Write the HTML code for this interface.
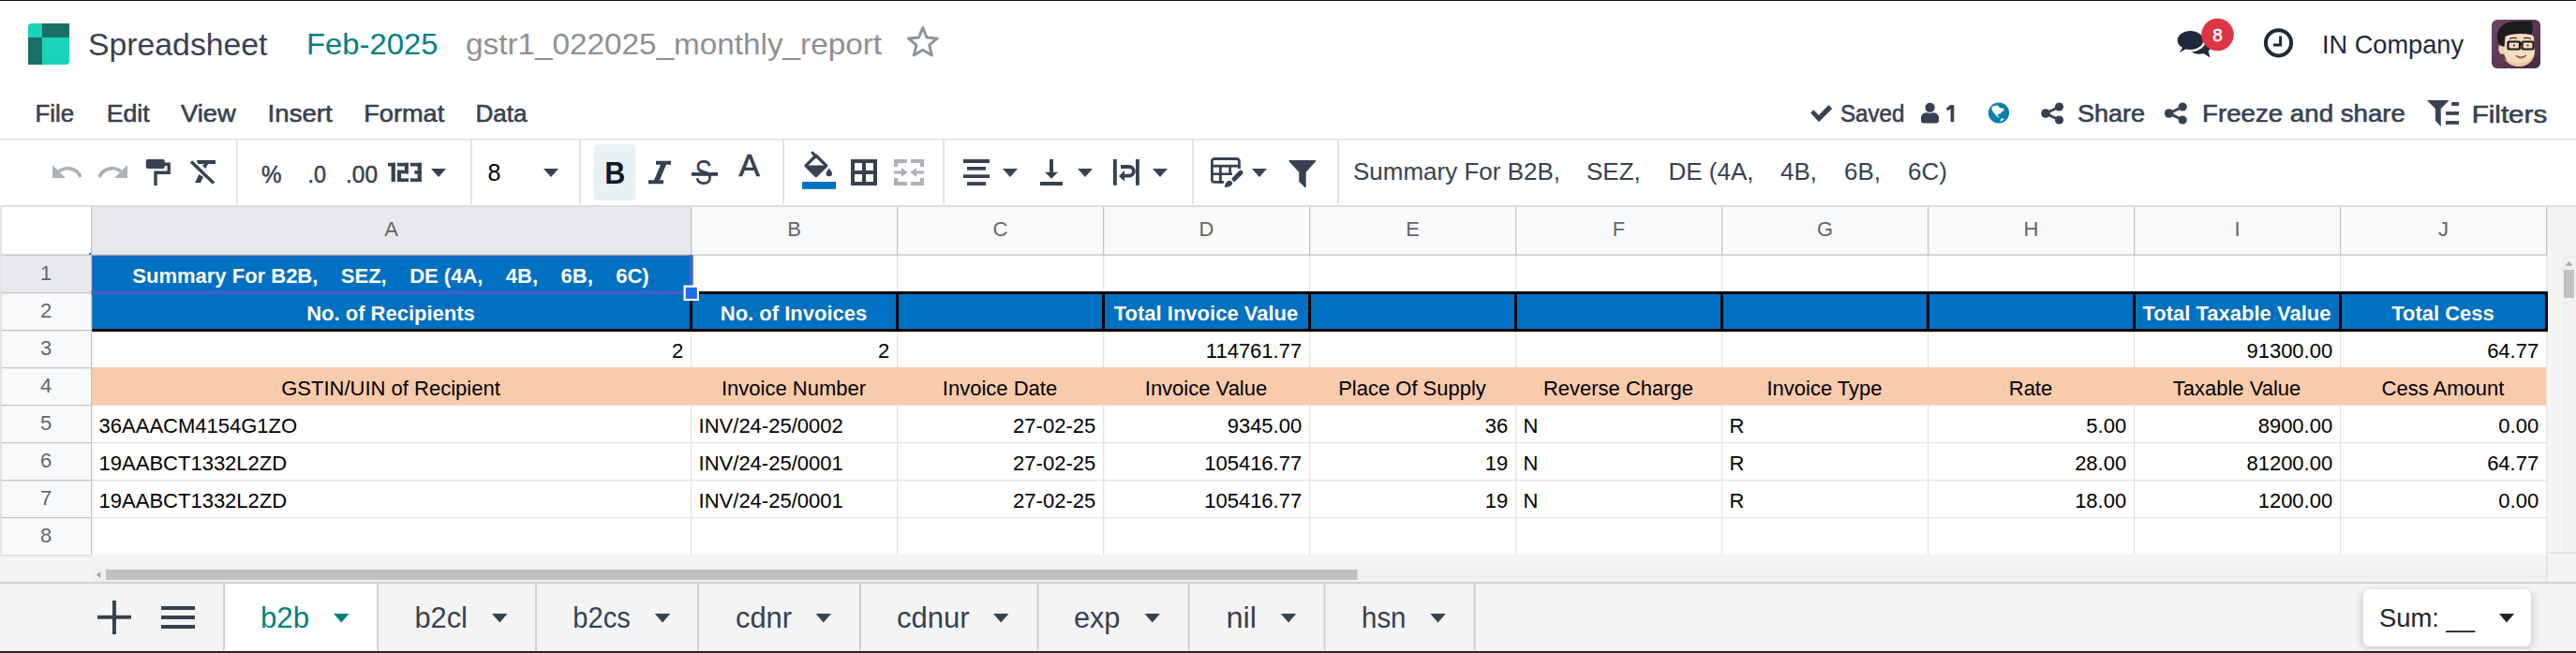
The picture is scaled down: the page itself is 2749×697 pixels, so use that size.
<!DOCTYPE html>
<html><head><meta charset="utf-8">
<style>
html,body{margin:0;padding:0;background:#fff;width:2749px;height:697px;overflow:hidden}
svg{display:block;font-family:"Liberation Sans",sans-serif}
</style></head><body>
<svg width="2749" height="697" viewBox="0 0 2749 697">
<rect x="0" y="0" width="2749" height="697" fill="#ffffff" />
<rect x="0" y="0" width="2749" height="1" fill="#111111" />
<g><path d="M34,25 H45 V40 H30 V29 A4,4 0 0 1 34,25 Z" fill="#1ad3bb"/><rect x="45" y="25" width="29" height="15" fill="#1b6f66"/><rect x="30" y="40" width="15" height="29" fill="#1b6f66"/><path d="M45,40 H74 V65 A4,4 0 0 1 70,69 H45 Z" fill="#1ad3bb"/></g>
<text x="94" y="59.3" font-size="34" fill="#374151" font-weight="400" text-anchor="start" textLength="191.5" lengthAdjust="spacingAndGlyphs"  xml:space="preserve">Spreadsheet</text>
<text x="327" y="58" font-size="32" fill="#017e84" font-weight="400" text-anchor="start" textLength="140.5" lengthAdjust="spacingAndGlyphs"  xml:space="preserve">Feb-2025</text>
<text x="497" y="58" font-size="32" fill="#8f8f8f" font-weight="400" text-anchor="start" textLength="444" lengthAdjust="spacingAndGlyphs"  xml:space="preserve">gstr1_022025_monthly_report</text>
<polygon points="984.80,29.70 989.09,39.99 1000.21,40.89 991.74,48.16 994.32,59.01 984.80,53.20 975.28,59.01 977.86,48.16 969.39,40.89 980.51,39.99" fill="none" stroke="#8e949c" stroke-width="3" stroke-linejoin="round"/>
<g fill="#1f2937"><ellipse cx="2347" cy="47.5" rx="13" ry="10.2"/><path d="M2350,56 L2358.5,61.5 L2356,52 Z"/></g>
<ellipse cx="2337.5" cy="43" rx="16.3" ry="12.3" fill="#ffffff"/>
<g fill="#1f2937"><ellipse cx="2337.5" cy="43" rx="13.8" ry="10"/><path d="M2326,56 L2334,51.5 L2330,49 Z"/></g>
<circle cx="2366.5" cy="37" r="17.3" fill="#dc3545"/>
<text x="2366.5" y="43.5" font-size="19" fill="#ffffff" font-weight="400" text-anchor="middle" stroke="#ffffff" stroke-width="0.5"  xml:space="preserve">8</text>
<circle cx="2431.5" cy="45.8" r="13.6" fill="none" stroke="#1f2937" stroke-width="4"/>
<path d="M2433.6,38.5 V48 H2426" fill="none" stroke="#1f2937" stroke-width="3"/>
<text x="2478" y="57" font-size="28" fill="#1f2937" font-weight="400" text-anchor="start" textLength="151" lengthAdjust="spacingAndGlyphs"  xml:space="preserve">IN Company</text>
<defs><linearGradient id="avg" x1="0" y1="0" x2="1" y2="1"><stop offset="0" stop-color="#6d4867"/><stop offset="1" stop-color="#4a2841"/></linearGradient></defs>
<rect x="2659" y="21" width="52" height="52" rx="6" fill="url(#avg)"/>
<g><ellipse cx="2670.5" cy="52" rx="4.2" ry="6" fill="#f3cfae"/><path d="M2672,40 C2674,33 2700,32 2704,40 L2705,56 C2704,66 2695,71 2688,71 C2679,70 2673,64 2672,56 Z" fill="#f8dcc0"/><path d="M2672,62 C2676,69 2683,71 2688,71 C2695,71 2702,67 2704,60 C2698,66 2690,68 2684,67 C2678,66 2674,64 2672,62 Z" fill="#eec7a4"/><path d="M2666,46 C2662,31 2671,23 2684,23 C2692,22 2699,22.5 2702,22.8 C2702,26 2704,32 2701,37 C2692,35.5 2681,35.5 2673.5,39 L2672.5,50 C2669,49 2667,48 2666,46 Z" fill="#1c1c1c"/><path d="M2678,41.5 Q2682,39.5 2686,41" fill="none" stroke="#3a2a22" stroke-width="1.3"/><path d="M2693,41 Q2697,39.5 2701,41.5" fill="none" stroke="#3a2a22" stroke-width="1.3"/><rect x="2676.5" y="44.5" width="12.5" height="8" rx="1" fill="none" stroke="#1a1a1a" stroke-width="2.2"/><rect x="2691.5" y="44.5" width="12" height="8" rx="1" fill="none" stroke="#1a1a1a" stroke-width="2.2"/><path d="M2689,47 H2691.5" stroke="#1a1a1a" stroke-width="2"/><circle cx="2683" cy="48.5" r="1.1" fill="#333"/><circle cx="2697.5" cy="48.5" r="1.1" fill="#333"/><path d="M2685,59.5 Q2690.5,62.5 2696,59 Q2691,65 2685,59.5 Z" fill="#ffffff" stroke="#6a3a2a" stroke-width="0.9"/></g>
<text x="37.5" y="130" font-size="26" fill="#374151" font-weight="400" text-anchor="start" textLength="41.5" lengthAdjust="spacingAndGlyphs" stroke="#374151" stroke-width="0.6"  xml:space="preserve">File</text>
<text x="113.7" y="130" font-size="26" fill="#374151" font-weight="400" text-anchor="start" textLength="46.0" lengthAdjust="spacingAndGlyphs" stroke="#374151" stroke-width="0.6"  xml:space="preserve">Edit</text>
<text x="193" y="130" font-size="26" fill="#374151" font-weight="400" text-anchor="start" textLength="58.7" lengthAdjust="spacingAndGlyphs" stroke="#374151" stroke-width="0.6"  xml:space="preserve">View</text>
<text x="285.6" y="130" font-size="26" fill="#374151" font-weight="400" text-anchor="start" textLength="69.1" lengthAdjust="spacingAndGlyphs" stroke="#374151" stroke-width="0.6"  xml:space="preserve">Insert</text>
<text x="388.3" y="130" font-size="26" fill="#374151" font-weight="400" text-anchor="start" textLength="85.9" lengthAdjust="spacingAndGlyphs" stroke="#374151" stroke-width="0.6"  xml:space="preserve">Format</text>
<text x="507.6" y="130" font-size="26" fill="#374151" font-weight="400" text-anchor="start" textLength="54.9" lengthAdjust="spacingAndGlyphs" stroke="#374151" stroke-width="0.6"  xml:space="preserve">Data</text>
<path d="M1932.6,120.5 L1935.3,117.7 L1941,123.4 L1951.3,112.5 L1954.8,115.9 L1941,129.8 Z" fill="#374151" stroke="#374151" stroke-width="0.8" stroke-linejoin="round"/>
<text x="1964" y="130" font-size="26" fill="#374151" font-weight="400" text-anchor="start" textLength="68.5" lengthAdjust="spacingAndGlyphs" stroke="#374151" stroke-width="0.6"  xml:space="preserve">Saved</text>
<path d="M2050,128.5 V126 C2050,122 2053,120.3 2056.5,120.3 H2062.5 C2066,120.3 2069,122 2069,126 V128.5 A3,3 0 0 1 2066,131.5 H2053 A3,3 0 0 1 2050,128.5 Z" fill="#374151"/>
<circle cx="2059.6" cy="114.8" r="5.6" fill="#374151" stroke="#ffffff" stroke-width="1"/>
<path d="M2081.6,112 H2085.3 V130 H2081.6 V116.3 L2078.2,118.2 L2077,115.4 Z" fill="#374151"/>
<circle cx="2133" cy="120.5" r="11.1" fill="#0a80a8"/>
<path d="M2125.1,115.6 L2127.2,112.9 L2131.8,112.4 L2133.2,114 L2134.5,115.2 L2138.2,115.6 L2138.7,117.5 L2135.9,119.8 L2134.5,121.6 L2132.2,121.8 L2131.8,123.9 L2133.6,124.8 L2132.7,125.8 L2129.9,123 L2126.7,119.3 Z" fill="#ffffff"/>
<path d="M2134.1,129.4 L2135.9,126.2 L2139.1,127.1 L2136.4,129 Z" fill="#ffffff"/>
<g fill="#374151"><circle cx="2197.5" cy="114" r="4.6"/><circle cx="2197.5" cy="128" r="4.6"/><circle cx="2183" cy="121" r="4.8"/></g>
<path d="M2183,121 L2197.5,114 M2183,121 L2197.5,128" stroke="#374151" stroke-width="2.8"/>
<text x="2217" y="130" font-size="26" fill="#374151" font-weight="400" text-anchor="start" textLength="72" lengthAdjust="spacingAndGlyphs" stroke="#374151" stroke-width="0.6"  xml:space="preserve">Share</text>
<g fill="#374151"><circle cx="2329.2" cy="114" r="4.6"/><circle cx="2329.2" cy="128" r="4.6"/><circle cx="2314.7" cy="121" r="4.8"/></g>
<path d="M2314.7,121 L2329.2,114 M2314.7,121 L2329.2,128" stroke="#374151" stroke-width="2.8"/>
<text x="2350" y="130" font-size="26" fill="#374151" font-weight="400" text-anchor="start" textLength="217" lengthAdjust="spacingAndGlyphs" stroke="#374151" stroke-width="0.6"  xml:space="preserve">Freeze and share</text>
<path d="M2590,107 H2613.7 L2604.8,116 V135 L2599,128.8 V116 Z" fill="#374151"/>
<rect x="2616.2" y="109" width="7.8" height="3.9" fill="#374151" />
<rect x="2610" y="119.1" width="14" height="3.7" fill="#374151" />
<rect x="2610" y="129.1" width="14" height="3.7" fill="#374151" />
<text x="2637.7" y="130.5" font-size="26" fill="#374151" font-weight="400" text-anchor="start" textLength="80.5" lengthAdjust="spacingAndGlyphs" stroke="#374151" stroke-width="0.6"  xml:space="preserve">Filters</text>
<rect x="0" y="148" width="2749" height="1.5" fill="#dee2e6" />
<path d="M56,176 V190 H70 Z" fill="#adb1b8"/>
<path d="M62,183.75 A15,15 0 0 1 86,189" fill="none" stroke="#adb1b8" stroke-width="3.6"/>
<path d="M136,176 V190 H122 Z" fill="#adb1b8"/>
<path d="M130,183.75 A15,15 0 0 0 106,189" fill="none" stroke="#adb1b8" stroke-width="3.6"/>
<rect x="155.8" y="170" width="20" height="10" rx="2" fill="#374151"/>
<path d="M175,175.2 H180.2 V184.2 H166 V198" fill="none" stroke="#374151" stroke-width="3.4"/>
<path d="M210,171 H230 V175 H222 L219.5,180 L216,177 L218,175 H211 Z" fill="#374151"/>
<path d="M212.5,186 L208,195 H214 L217,189 Z" fill="#374151"/>
<path d="M204,172.5 L228,195.5" stroke="#374151" stroke-width="3.4"/>
<rect x="252" y="150" width="2" height="68" fill="#e2e3e5" />
<text x="279" y="195" font-size="25" fill="#374151" font-weight="400" text-anchor="start" textLength="21.5" lengthAdjust="spacingAndGlyphs" stroke="#374151" stroke-width="0.5"  xml:space="preserve">%</text>
<text x="328.5" y="195" font-size="25" fill="#374151" font-weight="400" text-anchor="start" textLength="19.5" lengthAdjust="spacingAndGlyphs" stroke="#374151" stroke-width="0.5"  xml:space="preserve">.0</text>
<text x="369" y="195" font-size="25" fill="#374151" font-weight="400" text-anchor="start" textLength="34" lengthAdjust="spacingAndGlyphs" stroke="#374151" stroke-width="0.5"  xml:space="preserve">.00</text>
<rect x="414" y="173.8" width="7.8" height="3.7" fill="#374151" />
<rect x="417.6" y="173.8" width="4.2" height="20.2" fill="#374151" />
<rect x="424" y="173.8" width="11.8" height="3.7" fill="#374151" />
<rect x="431.9" y="173.8" width="3.9" height="11.5" fill="#374151" />
<rect x="424" y="181.7" width="11.8" height="3.6" fill="#374151" />
<rect x="424" y="181.7" width="4" height="12.3" fill="#374151" />
<rect x="424" y="190.4" width="12" height="3.6" fill="#374151" />
<rect x="437.8" y="173.8" width="12.0" height="3.7" fill="#374151" />
<rect x="445.6" y="173.8" width="4.2" height="20.2" fill="#374151" />
<rect x="442.4" y="182.1" width="7.4" height="3.7" fill="#374151" />
<rect x="437.8" y="190.4" width="12.0" height="3.6" fill="#374151" />
<path d="M460,180 H476 L468.0,189 Z" fill="#374151"/>
<rect x="502" y="150" width="2" height="68" fill="#e2e3e5" />
<text x="520.5" y="193" font-size="25" fill="#000000" font-weight="400" text-anchor="start"  xml:space="preserve">8</text>
<path d="M580,180 H596 L588.0,189 Z" fill="#374151"/>
<rect x="618" y="150" width="2" height="68" fill="#e2e3e5" />
<rect x="634" y="154" width="44" height="60" rx="4" fill="#e6f1f3"/>
<text x="645.2" y="196.3" font-size="33" fill="#111827" font-weight="700" text-anchor="start" textLength="22" lengthAdjust="spacingAndGlyphs"  xml:space="preserve">B</text>
<path d="M700,171.8 H716 V175.7 H711 L704,192.3 H708 V196.2 H692 V192.3 H698 L705,175.7 H700 Z" fill="#374151"/>
<text x="741.5" y="196.5" font-size="36" fill="#374151" font-weight="400" text-anchor="start" textLength="18.5" lengthAdjust="spacingAndGlyphs"  xml:space="preserve">S</text>
<rect x="738" y="184" width="28" height="3.8" fill="#374151" />
<text x="788.6" y="188.3" font-size="33" fill="#374151" font-weight="400" text-anchor="start" textLength="22.2" lengthAdjust="spacingAndGlyphs" stroke="#374151" stroke-width="0.7"  xml:space="preserve">A</text>
<rect x="835" y="150" width="2" height="68" fill="#e2e3e5" />
<path d="M870.8,166 L881.8,176.8 L870.8,187.6 L860,176.8 Z" fill="none" stroke="#374151" stroke-width="3.2" stroke-linejoin="round"/>
<path d="M861,176.5 H880.8 L870.8,187 Z" fill="#374151"/>
<path d="M867,163 L871,167.5" stroke="#374151" stroke-width="3" stroke-linecap="round"/>
<path d="M884.8,179.5 C886.5,182 888,183.5 888,185 A3.2,3.2 0 0 1 881.6,185 C881.6,183.5 883,182 884.8,179.5 Z" fill="#374151"/>
<rect x="856" y="194" width="36" height="7.8" fill="#0070c0" />
<path d="M908,170 H936 V198 H908 Z M912,174 V182 H920 V174 Z M924,174 V182 H932 V174 Z M912,186 V194 H920 V186 Z M924,186 V194 H932 V186 Z" fill="#374151" fill-rule="evenodd"/>
<g fill="#adb1b8"><path d="M954,170 H968 V174 H958 V178 H954 Z"/><path d="M986,170 H972 V174 H982 V178 H986 Z"/><path d="M954,198 H968 V194 H958 V190 H954 Z"/><path d="M986,198 H972 V194 H982 V190 H986 Z"/><path d="M954,182.5 H962 V179 L968.5,184 L962,189 V185.5 H954 Z"/><path d="M986,182.5 H978 V179 L971.5,184 L978,189 V185.5 H986 Z"/></g>
<rect x="1006" y="150" width="2" height="68" fill="#e2e3e5" />
<rect x="1028" y="170" width="28" height="4" fill="#374151" />
<rect x="1032" y="178" width="20" height="3.7" fill="#374151" />
<rect x="1028" y="186.3" width="28" height="3.7" fill="#374151" />
<rect x="1032" y="194.2" width="20" height="3.8" fill="#374151" />
<path d="M1070,180 H1086 L1078.0,189 Z" fill="#374151"/>
<rect x="1120" y="170" width="4" height="15" fill="#374151" />
<path d="M1115,183.7 H1129 L1122,190.8 Z" fill="#374151"/>
<rect x="1110" y="194" width="24" height="4" fill="#374151" />
<path d="M1150,180 H1166 L1158.0,189 Z" fill="#374151"/>
<rect x="1188" y="170" width="3.8" height="27.8" fill="#374151" />
<rect x="1212" y="170" width="3.8" height="27.8" fill="#374151" />
<path d="M1196,178 H1205 A4.85,4.85 0 0 1 1205,187.7 H1199" fill="none" stroke="#374151" stroke-width="3.8"/>
<path d="M1194,187.9 L1200,182 V193.8 Z" fill="#374151"/>
<path d="M1230,180 H1246 L1238.0,189 Z" fill="#374151"/>
<rect x="1272" y="150" width="2" height="68" fill="#e2e3e5" />
<path d="M1306,194.4 H1296 A2.6,2.6 0 0 1 1293.4,191.8 V172.1 A2.6,2.6 0 0 1 1296,169.5 H1319.8 A2.6,2.6 0 0 1 1322.4,172.1 V180" fill="none" stroke="#374151" stroke-width="2.8"/>
<rect x="1293" y="175.8" width="30.8" height="2.8" fill="#374151" />
<rect x="1293" y="184.4" width="22" height="2.6" fill="#374151" />
<rect x="1301" y="177" width="2.8" height="18.8" fill="#374151" />
<rect x="1311.3" y="177" width="2.7" height="10" fill="#374151" />
<path d="M1317,191.3 L1324,184.2" stroke="#ffffff" stroke-width="8.5" stroke-linecap="round"/>
<path d="M1317,191.3 L1324,184.2" stroke="#374151" stroke-width="5" stroke-linecap="round"/>
<path d="M1305.8,200.8 C1306.5,197 1307,193.5 1310.5,192.3 C1313.5,191.3 1316.5,193.5 1315.8,196.5 C1315,199.5 1311,200.8 1305.8,200.8 Z" fill="#374151" stroke="#ffffff" stroke-width="1.6"/>
<path d="M1336,180 H1352 L1344.0,189 Z" fill="#374151"/>
<path d="M1376,171.7 H1403.6 L1393,183.5 V199.5 L1387,193.5 V183.5 Z" fill="#374151" stroke="#374151" stroke-width="1.4" stroke-linejoin="round"/>
<rect x="1427" y="150" width="2" height="68" fill="#e2e3e5" />
<text x="1444" y="192.2" font-size="26" fill="#374151" font-weight="400" text-anchor="start"  xml:space="preserve">Summary For B2B,</text>
<text x="1693" y="192.2" font-size="26" fill="#374151" font-weight="400" text-anchor="start"  xml:space="preserve">SEZ,</text>
<text x="1780.5" y="192.2" font-size="26" fill="#374151" font-weight="400" text-anchor="start"  xml:space="preserve">DE (4A,</text>
<text x="1900" y="192.2" font-size="26" fill="#374151" font-weight="400" text-anchor="start"  xml:space="preserve">4B,</text>
<text x="1968" y="192.2" font-size="26" fill="#374151" font-weight="400" text-anchor="start"  xml:space="preserve">6B,</text>
<text x="2036" y="192.2" font-size="26" fill="#374151" font-weight="400" text-anchor="start"  xml:space="preserve">6C)</text>
<rect x="0" y="219" width="2749" height="2" fill="#dcdedd" />
<rect x="0" y="221" width="2749" height="400" fill="#f4f4f4" />
<rect x="0" y="221" width="97" height="51" fill="#ffffff" />
<rect x="97" y="221" width="2620" height="51" fill="#f8f9fa" />
<rect x="97" y="221" width="640" height="51" fill="#e8e9ed" />
<rect x="0" y="272" width="97" height="320" fill="#f8f9fa" />
<rect x="0" y="272" width="97" height="40" fill="#e8e9ed" />
<rect x="97" y="272" width="2620" height="320" fill="#ffffff" />
<rect x="737" y="272" width="1.3" height="320" fill="#e2e3e3" />
<rect x="957" y="272" width="1.3" height="320" fill="#e2e3e3" />
<rect x="1177" y="272" width="1.3" height="320" fill="#e2e3e3" />
<rect x="1397" y="272" width="1.3" height="320" fill="#e2e3e3" />
<rect x="1617" y="272" width="1.3" height="320" fill="#e2e3e3" />
<rect x="1837" y="272" width="1.3" height="320" fill="#e2e3e3" />
<rect x="2057" y="272" width="1.3" height="320" fill="#e2e3e3" />
<rect x="2277" y="272" width="1.3" height="320" fill="#e2e3e3" />
<rect x="2497" y="272" width="1.3" height="320" fill="#e2e3e3" />
<rect x="2717" y="272" width="1.3" height="320" fill="#e2e3e3" />
<rect x="97" y="312" width="2620" height="1.3" fill="#e2e3e3" />
<rect x="97" y="352" width="2620" height="1.3" fill="#e2e3e3" />
<rect x="97" y="392" width="2620" height="1.3" fill="#e2e3e3" />
<rect x="97" y="432" width="2620" height="1.3" fill="#e2e3e3" />
<rect x="97" y="472" width="2620" height="1.3" fill="#e2e3e3" />
<rect x="97" y="512" width="2620" height="1.3" fill="#e2e3e3" />
<rect x="97" y="552" width="2620" height="1.3" fill="#e2e3e3" />
<rect x="97" y="272" width="640" height="40" fill="#0070c0" />
<rect x="97" y="312" width="2620" height="40" fill="#0070c0" />
<rect x="97" y="392" width="2620" height="40" fill="#f8cbad" />
<rect x="736.5" y="392" width="1" height="40" fill="#f3cfb6" />
<rect x="956.5" y="392" width="1" height="40" fill="#f3cfb6" />
<rect x="1176.5" y="392" width="1" height="40" fill="#f3cfb6" />
<rect x="1396.5" y="392" width="1" height="40" fill="#f3cfb6" />
<rect x="1616.5" y="392" width="1" height="40" fill="#f3cfb6" />
<rect x="1836.5" y="392" width="1" height="40" fill="#f3cfb6" />
<rect x="2056.5" y="392" width="1" height="40" fill="#f3cfb6" />
<rect x="2276.5" y="392" width="1" height="40" fill="#f3cfb6" />
<rect x="2496.5" y="392" width="1" height="40" fill="#f3cfb6" />
<rect x="97" y="311" width="2622" height="3" fill="#000000" />
<rect x="97" y="351" width="2622" height="3" fill="#000000" />
<rect x="736" y="311" width="3" height="43" fill="#000000" />
<rect x="956" y="311" width="3" height="43" fill="#000000" />
<rect x="1176" y="311" width="3" height="43" fill="#000000" />
<rect x="1396" y="311" width="3" height="43" fill="#000000" />
<rect x="1616" y="311" width="3" height="43" fill="#000000" />
<rect x="1836" y="311" width="3" height="43" fill="#000000" />
<rect x="2056" y="311" width="3" height="43" fill="#000000" />
<rect x="2276" y="311" width="3" height="43" fill="#000000" />
<rect x="2496" y="311" width="3" height="43" fill="#000000" />
<rect x="2716" y="311" width="3" height="43" fill="#000000" />
<rect x="737" y="221" width="1.3" height="51" fill="#c4c4c4" />
<rect x="957" y="221" width="1.3" height="51" fill="#c4c4c4" />
<rect x="1177" y="221" width="1.3" height="51" fill="#c4c4c4" />
<rect x="1397" y="221" width="1.3" height="51" fill="#c4c4c4" />
<rect x="1617" y="221" width="1.3" height="51" fill="#c4c4c4" />
<rect x="1837" y="221" width="1.3" height="51" fill="#c4c4c4" />
<rect x="2057" y="221" width="1.3" height="51" fill="#c4c4c4" />
<rect x="2277" y="221" width="1.3" height="51" fill="#c4c4c4" />
<rect x="2497" y="221" width="1.3" height="51" fill="#c4c4c4" />
<rect x="2717" y="221" width="1.3" height="51" fill="#c4c4c4" />
<rect x="0" y="271.5" width="2718" height="1.3" fill="#c4c4c4" />
<rect x="0" y="312" width="97" height="1.3" fill="#c4c4c4" />
<rect x="0" y="352" width="97" height="1.3" fill="#c4c4c4" />
<rect x="0" y="392" width="97" height="1.3" fill="#c4c4c4" />
<rect x="0" y="432" width="97" height="1.3" fill="#c4c4c4" />
<rect x="0" y="472" width="97" height="1.3" fill="#c4c4c4" />
<rect x="0" y="512" width="97" height="1.3" fill="#c4c4c4" />
<rect x="0" y="552" width="97" height="1.3" fill="#c4c4c4" />
<rect x="0" y="592" width="97" height="1.3" fill="#c4c4c4" />
<rect x="97" y="221" width="1.3" height="371" fill="#c4c4c4" />
<text x="417.5" y="252" font-size="22" fill="#666666" font-weight="400" text-anchor="middle"  xml:space="preserve">A</text>
<text x="847.5" y="252" font-size="22" fill="#666666" font-weight="400" text-anchor="middle"  xml:space="preserve">B</text>
<text x="1067.5" y="252" font-size="22" fill="#666666" font-weight="400" text-anchor="middle"  xml:space="preserve">C</text>
<text x="1287.5" y="252" font-size="22" fill="#666666" font-weight="400" text-anchor="middle"  xml:space="preserve">D</text>
<text x="1507.5" y="252" font-size="22" fill="#666666" font-weight="400" text-anchor="middle"  xml:space="preserve">E</text>
<text x="1727.5" y="252" font-size="22" fill="#666666" font-weight="400" text-anchor="middle"  xml:space="preserve">F</text>
<text x="1947.5" y="252" font-size="22" fill="#666666" font-weight="400" text-anchor="middle"  xml:space="preserve">G</text>
<text x="2167.5" y="252" font-size="22" fill="#666666" font-weight="400" text-anchor="middle"  xml:space="preserve">H</text>
<text x="2387.5" y="252" font-size="22" fill="#666666" font-weight="400" text-anchor="middle"  xml:space="preserve">I</text>
<text x="2607.5" y="252" font-size="22" fill="#666666" font-weight="400" text-anchor="middle"  xml:space="preserve">J</text>
<text x="49" y="299.0" font-size="22" fill="#666666" font-weight="400" text-anchor="middle"  xml:space="preserve">1</text>
<text x="49" y="339.0" font-size="22" fill="#666666" font-weight="400" text-anchor="middle"  xml:space="preserve">2</text>
<text x="49" y="379.0" font-size="22" fill="#666666" font-weight="400" text-anchor="middle"  xml:space="preserve">3</text>
<text x="49" y="419.0" font-size="22" fill="#666666" font-weight="400" text-anchor="middle"  xml:space="preserve">4</text>
<text x="49" y="459.0" font-size="22" fill="#666666" font-weight="400" text-anchor="middle"  xml:space="preserve">5</text>
<text x="49" y="499.0" font-size="22" fill="#666666" font-weight="400" text-anchor="middle"  xml:space="preserve">6</text>
<text x="49" y="539.0" font-size="22" fill="#666666" font-weight="400" text-anchor="middle"  xml:space="preserve">7</text>
<text x="49" y="579.0" font-size="22" fill="#666666" font-weight="400" text-anchor="middle"  xml:space="preserve">8</text>
<text x="417.0" y="302" font-size="22" fill="#ffffff" font-weight="700" text-anchor="middle"  xml:space="preserve">Summary For B2B,    SEZ,    DE (4A,    4B,    6B,    6C)</text>
<text x="417.0" y="342" font-size="22" fill="#ffffff" font-weight="700" text-anchor="middle"  xml:space="preserve">No. of Recipients</text>
<text x="847.0" y="342" font-size="22" fill="#ffffff" font-weight="700" text-anchor="middle"  xml:space="preserve">No. of Invoices</text>
<text x="1287.0" y="342" font-size="22" fill="#ffffff" font-weight="700" text-anchor="middle"  xml:space="preserve">Total Invoice Value</text>
<text x="2387.0" y="342" font-size="22" fill="#ffffff" font-weight="700" text-anchor="middle"  xml:space="preserve">Total Taxable Value</text>
<text x="2607.0" y="342" font-size="22" fill="#ffffff" font-weight="700" text-anchor="middle"  xml:space="preserve">Total Cess</text>
<text x="729.2" y="382" font-size="22" fill="#000000" font-weight="400" text-anchor="end"  xml:space="preserve">2</text>
<text x="949.2" y="382" font-size="22" fill="#000000" font-weight="400" text-anchor="end"  xml:space="preserve">2</text>
<text x="1389.2" y="382" font-size="22" fill="#000000" font-weight="400" text-anchor="end"  xml:space="preserve">114761.77</text>
<text x="2489.2" y="382" font-size="22" fill="#000000" font-weight="400" text-anchor="end"  xml:space="preserve">91300.00</text>
<text x="2709.2" y="382" font-size="22" fill="#000000" font-weight="400" text-anchor="end"  xml:space="preserve">64.77</text>
<text x="417.0" y="422" font-size="22" fill="#000000" font-weight="400" text-anchor="middle"  xml:space="preserve">GSTIN/UIN of Recipient</text>
<text x="847.0" y="422" font-size="22" fill="#000000" font-weight="400" text-anchor="middle"  xml:space="preserve">Invoice Number</text>
<text x="1067.0" y="422" font-size="22" fill="#000000" font-weight="400" text-anchor="middle"  xml:space="preserve">Invoice Date</text>
<text x="1287.0" y="422" font-size="22" fill="#000000" font-weight="400" text-anchor="middle"  xml:space="preserve">Invoice Value</text>
<text x="1507.0" y="422" font-size="22" fill="#000000" font-weight="400" text-anchor="middle"  xml:space="preserve">Place Of Supply</text>
<text x="1727.0" y="422" font-size="22" fill="#000000" font-weight="400" text-anchor="middle"  xml:space="preserve">Reverse Charge</text>
<text x="1947.0" y="422" font-size="22" fill="#000000" font-weight="400" text-anchor="middle"  xml:space="preserve">Invoice Type</text>
<text x="2167.0" y="422" font-size="22" fill="#000000" font-weight="400" text-anchor="middle"  xml:space="preserve">Rate</text>
<text x="2387.0" y="422" font-size="22" fill="#000000" font-weight="400" text-anchor="middle"  xml:space="preserve">Taxable Value</text>
<text x="2607.0" y="422" font-size="22" fill="#000000" font-weight="400" text-anchor="middle"  xml:space="preserve">Cess Amount</text>
<text x="105.6" y="462" font-size="22" fill="#000000" font-weight="400" text-anchor="start"  xml:space="preserve">36AAACM4154G1ZO</text>
<text x="745.6" y="462" font-size="22" fill="#000000" font-weight="400" text-anchor="start"  xml:space="preserve">INV/24-25/0002</text>
<text x="1169.2" y="462" font-size="22" fill="#000000" font-weight="400" text-anchor="end"  xml:space="preserve">27-02-25</text>
<text x="1389.2" y="462" font-size="22" fill="#000000" font-weight="400" text-anchor="end"  xml:space="preserve">9345.00</text>
<text x="1609.2" y="462" font-size="22" fill="#000000" font-weight="400" text-anchor="end"  xml:space="preserve">36</text>
<text x="1625.6" y="462" font-size="22" fill="#000000" font-weight="400" text-anchor="start"  xml:space="preserve">N</text>
<text x="1845.6" y="462" font-size="22" fill="#000000" font-weight="400" text-anchor="start"  xml:space="preserve">R</text>
<text x="2269.2" y="462" font-size="22" fill="#000000" font-weight="400" text-anchor="end"  xml:space="preserve">5.00</text>
<text x="2489.2" y="462" font-size="22" fill="#000000" font-weight="400" text-anchor="end"  xml:space="preserve">8900.00</text>
<text x="2709.2" y="462" font-size="22" fill="#000000" font-weight="400" text-anchor="end"  xml:space="preserve">0.00</text>
<text x="105.6" y="502" font-size="22" fill="#000000" font-weight="400" text-anchor="start"  xml:space="preserve">19AABCT1332L2ZD</text>
<text x="745.6" y="502" font-size="22" fill="#000000" font-weight="400" text-anchor="start"  xml:space="preserve">INV/24-25/0001</text>
<text x="1169.2" y="502" font-size="22" fill="#000000" font-weight="400" text-anchor="end"  xml:space="preserve">27-02-25</text>
<text x="1389.2" y="502" font-size="22" fill="#000000" font-weight="400" text-anchor="end"  xml:space="preserve">105416.77</text>
<text x="1609.2" y="502" font-size="22" fill="#000000" font-weight="400" text-anchor="end"  xml:space="preserve">19</text>
<text x="1625.6" y="502" font-size="22" fill="#000000" font-weight="400" text-anchor="start"  xml:space="preserve">N</text>
<text x="1845.6" y="502" font-size="22" fill="#000000" font-weight="400" text-anchor="start"  xml:space="preserve">R</text>
<text x="2269.2" y="502" font-size="22" fill="#000000" font-weight="400" text-anchor="end"  xml:space="preserve">28.00</text>
<text x="2489.2" y="502" font-size="22" fill="#000000" font-weight="400" text-anchor="end"  xml:space="preserve">81200.00</text>
<text x="2709.2" y="502" font-size="22" fill="#000000" font-weight="400" text-anchor="end"  xml:space="preserve">64.77</text>
<text x="105.6" y="542" font-size="22" fill="#000000" font-weight="400" text-anchor="start"  xml:space="preserve">19AABCT1332L2ZD</text>
<text x="745.6" y="542" font-size="22" fill="#000000" font-weight="400" text-anchor="start"  xml:space="preserve">INV/24-25/0001</text>
<text x="1169.2" y="542" font-size="22" fill="#000000" font-weight="400" text-anchor="end"  xml:space="preserve">27-02-25</text>
<text x="1389.2" y="542" font-size="22" fill="#000000" font-weight="400" text-anchor="end"  xml:space="preserve">105416.77</text>
<text x="1609.2" y="542" font-size="22" fill="#000000" font-weight="400" text-anchor="end"  xml:space="preserve">19</text>
<text x="1625.6" y="542" font-size="22" fill="#000000" font-weight="400" text-anchor="start"  xml:space="preserve">N</text>
<text x="1845.6" y="542" font-size="22" fill="#000000" font-weight="400" text-anchor="start"  xml:space="preserve">R</text>
<text x="2269.2" y="542" font-size="22" fill="#000000" font-weight="400" text-anchor="end"  xml:space="preserve">18.00</text>
<text x="2489.2" y="542" font-size="22" fill="#000000" font-weight="400" text-anchor="end"  xml:space="preserve">1200.00</text>
<text x="2709.2" y="542" font-size="22" fill="#000000" font-weight="400" text-anchor="end"  xml:space="preserve">0.00</text>
<rect x="98" y="272.8" width="640" height="1.2" fill="#3b63c9" />
<rect x="98.3" y="272.8" width="1.2" height="40" fill="#3b63c9" />
<rect x="97.5" y="310.2" width="642" height="4.4" fill="#3b63c9" />
<rect x="735.3" y="272.2" width="4.4" height="42.4" fill="#3b63c9" />
<rect x="95" y="270" width="2" height="2" fill="#3b63c9" />
<rect x="729.5" y="304.5" width="16.5" height="16.5" fill="#ffffff"/>
<rect x="731.8" y="306.8" width="12" height="12" fill="#1f6ae6"/>
<rect x="0" y="219" width="2" height="373" fill="#e2e4e3" />
<rect x="2734" y="272" width="15" height="317" fill="#f0f0f0" />
<path d="M2737.5,283.5 H2745.5 L2741.5,279 Z" fill="#a3a3a3"/>
<rect x="2736" y="288" width="11" height="30" fill="#c1c1c1" />
<rect x="98" y="606" width="2619" height="15" fill="#f0f0f0" />
<path d="M107.2,610 V617 L102.8,613.5 Z" fill="#a3a3a3"/>
<rect x="113" y="608" width="1335.6" height="11" fill="#c1c1c1" />
<rect x="0" y="592" width="97" height="1" fill="#e0e0e0" />
<rect x="2717" y="592" width="2" height="29" fill="#e3e4e4" />
<rect x="2719" y="589" width="30" height="2" fill="#e3e4e4" />
<rect x="0" y="621" width="2749" height="2" fill="#d2d2d2" />
<rect x="0" y="623" width="2749" height="72" fill="#f4f4f4" />
<rect x="104" y="656.8" width="36" height="3.9" fill="#374151" />
<rect x="120" y="641" width="3.9" height="36" fill="#374151" />
<rect x="172" y="647" width="36" height="4" fill="#374151" />
<rect x="172" y="657" width="36" height="4" fill="#374151" />
<rect x="172" y="667" width="36" height="4" fill="#374151" />
<rect x="239" y="623" width="164" height="72" fill="#ffffff" />
<rect x="238" y="623" width="2" height="72" fill="#cfcfcf" />
<text x="278" y="669.8" font-size="31" fill="#017e84" font-weight="400" text-anchor="start" textLength="52" lengthAdjust="spacingAndGlyphs"  xml:space="preserve">b2b</text>
<path d="M356,655 H372.5 L364.25,664.5 Z" fill="#017e84"/>
<rect x="402" y="623" width="2" height="72" fill="#cfcfcf" />
<text x="442.4" y="669.8" font-size="31" fill="#374151" font-weight="400" text-anchor="start" textLength="56.5" lengthAdjust="spacingAndGlyphs"  xml:space="preserve">b2cl</text>
<path d="M525,655 H541.5 L533.25,664.5 Z" fill="#374151"/>
<rect x="571" y="623" width="2" height="72" fill="#cfcfcf" />
<text x="611.3" y="669.8" font-size="31" fill="#374151" font-weight="400" text-anchor="start" textLength="61.4" lengthAdjust="spacingAndGlyphs"  xml:space="preserve">b2cs</text>
<path d="M698.8,655 H715.3 L707.05,664.5 Z" fill="#374151"/>
<rect x="744" y="623" width="2" height="72" fill="#cfcfcf" />
<text x="785" y="669.8" font-size="31" fill="#374151" font-weight="400" text-anchor="start" textLength="60" lengthAdjust="spacingAndGlyphs"  xml:space="preserve">cdnr</text>
<path d="M870.5,655 H887.0 L878.75,664.5 Z" fill="#374151"/>
<rect x="917" y="623" width="2" height="72" fill="#cfcfcf" />
<text x="957" y="669.8" font-size="31" fill="#374151" font-weight="400" text-anchor="start" textLength="77.7" lengthAdjust="spacingAndGlyphs"  xml:space="preserve">cdnur</text>
<path d="M1060,655 H1076.5 L1068.25,664.5 Z" fill="#374151"/>
<rect x="1106.5" y="623" width="2" height="72" fill="#cfcfcf" />
<text x="1146" y="669.8" font-size="31" fill="#374151" font-weight="400" text-anchor="start" textLength="49.4" lengthAdjust="spacingAndGlyphs"  xml:space="preserve">exp</text>
<path d="M1221.5,655 H1238.0 L1229.75,664.5 Z" fill="#374151"/>
<rect x="1267.5" y="623" width="2" height="72" fill="#cfcfcf" />
<text x="1308.4" y="669.8" font-size="31" fill="#374151" font-weight="400" text-anchor="start" textLength="32.6" lengthAdjust="spacingAndGlyphs"  xml:space="preserve">nil</text>
<path d="M1366.8,655 H1383.3 L1375.05,664.5 Z" fill="#374151"/>
<rect x="1412.5" y="623" width="2" height="72" fill="#cfcfcf" />
<text x="1453" y="669.8" font-size="31" fill="#374151" font-weight="400" text-anchor="start" textLength="47.5" lengthAdjust="spacingAndGlyphs"  xml:space="preserve">hsn</text>
<path d="M1526.3,655 H1542.8 L1534.55,664.5 Z" fill="#374151"/>
<rect x="1572.5" y="623" width="2" height="72" fill="#cfcfcf" />
<defs><filter id="sh" x="-20%" y="-30%" width="140%" height="160%"><feGaussianBlur stdDeviation="5"/></filter></defs>
<rect x="2520" y="631" width="183" height="62" rx="8" fill="#000000" opacity="0.16" filter="url(#sh)"/>
<rect x="2522" y="629" width="179" height="61" rx="7" fill="#ffffff"/>
<text x="2539" y="669" font-size="28" fill="#212529" font-weight="400" text-anchor="start" textLength="102" lengthAdjust="spacingAndGlyphs"  xml:space="preserve">Sum: __</text>
<path d="M2667,655 H2683 L2675.0,664.5 Z" fill="#212529"/>
<rect x="0" y="694" width="2749" height="1" fill="#ffffff" />
<rect x="0" y="695" width="2749" height="1" fill="#141414" />
<rect x="0" y="696" width="2749" height="1" fill="#3c2a36" />
</svg>
</body></html>
